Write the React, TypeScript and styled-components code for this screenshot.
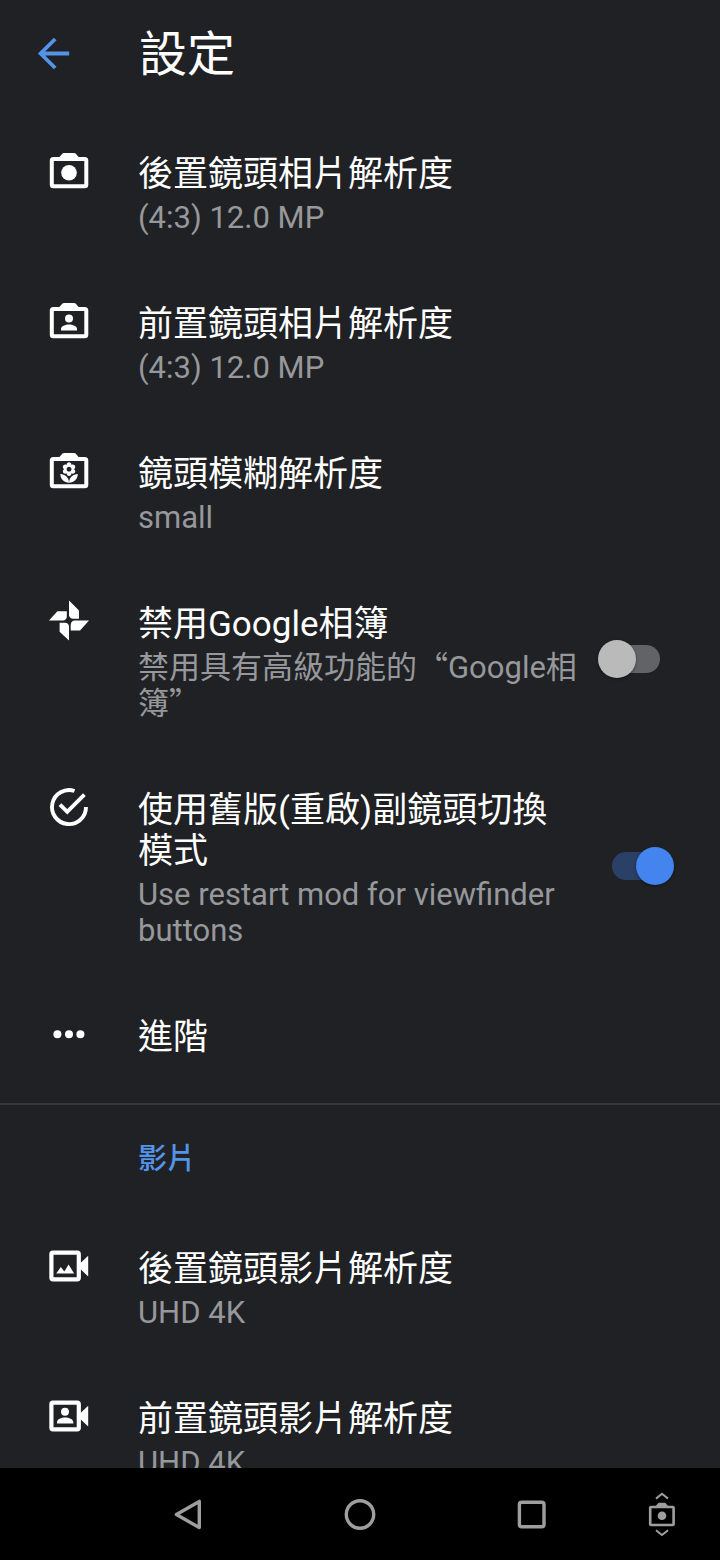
import React, { useId, useState } from "react";
import styled, { createGlobalStyle } from "styled-components";

const GlobalStyle = createGlobalStyle`
  * { box-sizing: border-box; }
  body {
    margin: 0;
    background: #202124;
    font-family: Roboto, "Noto Sans CJK TC", sans-serif;
  }
`;

const Screen = styled.div`
  display: flex;
  flex-direction: column;
  height: 100vh;
  color: #ffffff;
  background: #202124;
`;

const Header = styled.header`
  display: flex;
  align-items: center;
  gap: 61px;
  flex: none;
  height: 106px;
  padding-left: 30px;
  border-bottom: 1px solid #1e1f22;
`;

const BackButton = styled.button`
  display: flex;
  padding: 0;
  border: 0;
  background: none;
  color: #5494e8;
`;

const PageTitle = styled.h1`
  margin: 0;
  padding-top: 4px;
  font-size: 48px;
  line-height: 64px;
  font-weight: 400;
`;

const Content = styled.main`
  flex: 1;
  min-height: 0;
  overflow-y: auto;
  scrollbar-width: none;
`;

const Group = styled.ul`
  margin: 0;
  padding: 0;
  list-style: none;
`;

const FirstGroup = styled(Group)`
  padding: 14px 0 11px;
  border-bottom: 2px solid #37383b;
`;

const Row = styled.div`
  display: flex;
  align-items: flex-start;
  width: 100%;
  padding: 34px 46px 34px 45px;
  border: 0;
  background: none;
  color: inherit;
  font-family: inherit;
  text-align: left;
`;

const IconBox = styled.span`
  display: flex;
  flex: none;
  margin: -7px 45px 0 0;
`;

const TextBlock = styled.span`
  display: flex;
  flex-direction: column;
  flex: 1;
  gap: 5px;
  min-width: 0;
`;

const RowTitle = styled.span`
  font-size: 35px;
  line-height: 41px;
`;

const Summary = styled.span`
  font-size: 31px;
  line-height: 36px;
  color: #96989c;
`;

const WideQuote = styled.span`
  display: inline-block;
  font-family: "Noto Sans CJK TC", sans-serif;
  line-height: 28px;
`;

const SectionTitle = styled.h2`
  margin: 0;
  padding: 34px 46px 36px 138px;
  font-size: 29px;
  line-height: 40px;
  font-weight: 500;
  color: #5494e8;
`;

const Switch = styled.input`
  appearance: none;
  display: grid;
  align-items: center;
  align-self: center;
  flex: none;
  width: 76px;
  height: 38px;
  margin: 0 0 8px 16px;

  &::before,
  &::after {
    content: "";
    grid-area: 1 / 1;
  }
  &::before {
    justify-self: center;
    width: 48px;
    height: 28px;
    border-radius: 14px;
    background: #626366;
  }
  &::after {
    justify-self: start;
    width: 38px;
    height: 38px;
    border-radius: 50%;
    background: #bababa;
    box-shadow: 0 1px 3px rgba(0, 0, 0, 0.4);
  }
  &:checked::before {
    background: #2b4067;
  }
  &:checked::after {
    justify-self: end;
    background: #4384ee;
  }
`;

const NavBar = styled.nav`
  display: grid;
  grid-template-columns: 1fr repeat(3, 172px) 1fr;
  align-items: center;
  flex: none;
  height: 92px;
  background: #000000;
`;

const NavButton = styled.button`
  display: flex;
  justify-content: center;
  padding: 0;
  border: 0;
  background: none;
  color: #9e9e9e;

  &:first-child {
    grid-column: 2;
  }
  &:last-child {
    width: 88px;
  }
`;

function Glyph({ children }: { children: React.ReactNode }) {
  return (
    <svg width="48" height="48" viewBox="0 0 48 48" fill="currentColor" aria-hidden="true">
      {children}
    </svg>
  );
}

function CameraBody() {
  return (
    <>
      <path d="M13.5 11 17.5 6.6Q18 6 19 6H29Q30 6 30.6 6.6L34.5 11Z" />
      <rect x="6.8" y="12" width="34.5" height="27.3" rx="1.6" fill="none" stroke="currentColor" strokeWidth="4" />
    </>
  );
}

function VideoBody() {
  return (
    <>
      <rect x="6.4" y="10.6" width="27.4" height="26.8" rx="1.6" fill="none" stroke="currentColor" strokeWidth="4.2" />
      <path d="M35 21.5 43.2 13.8V34.4L35 26.7Z" />
    </>
  );
}

const RearCamera = () => (
  <Glyph>
    <CameraBody />
    <circle cx="24" cy="25.7" r="7.8" />
  </Glyph>
);

const FrontCamera = () => (
  <Glyph>
    <CameraBody />
    <circle cx="24" cy="21.5" r="4" />
    <path d="M16 33.5V32C16 29 20.5 27.4 24 27.4S32 29 32 32V33.5Z" />
  </Glyph>
);

const FlowerCamera = () => (
  <Glyph>
    <CameraBody />
    <path
      transform="translate(12.4 14.4) scale(0.97)"
      d="M12 22c4.97 0 9-4.03 9-9-4.97 0-9 4.03-9 9zM5.6 10.25c0 1.38 1.12 2.5 2.5 2.5.53 0 1.01-.16 1.42-.44l-.02.19c0 1.38 1.12 2.5 2.5 2.5s2.5-1.12 2.5-2.5l-.02-.19c.4.28.89.44 1.42.44 1.38 0 2.5-1.12 2.5-2.5 0-1-.59-1.85-1.43-2.25.84-.4 1.43-1.25 1.43-2.25 0-1.38-1.12-2.5-2.5-2.5-.53 0-1.01.16-1.42.44l.02-.19C14.5 2.12 13.38 1 12 1S9.5 2.12 9.5 3.5l.02.19c-.4-.28-.89-.44-1.42-.44-1.38 0-2.5 1.12-2.5 2.5 0 1 .59 1.85 1.43 2.25-.84.4-1.43 1.25-1.43 2.25zM12 5.5c1.38 0 2.5 1.12 2.5 2.5s-1.12 2.5-2.5 2.5S9.5 9.38 9.5 8s1.12-2.5 2.5-2.5zM3 13c0 4.97 4.03 9 9 9 0-4.97-4.03-9-9-9z"
    />
  </Glyph>
);

const Pinwheel = () => (
  <Glyph>
    <path d="M24 3.5 34 13.5V21.8H28Q24.6 21.5 24 18.5Z" />
    <path d="M44 23.5 35 33.6H25.7V28Q26 24.3 29 23.5Z" />
    <path d="M24 43.6 14.6 34.8V25.8H20Q23.5 26 24 29Z" />
    <path d="M4 23.5 12.4 14.2H21.8V20Q21.6 22.8 19 23.5Z" />
  </Glyph>
);

const CheckCircle = () => (
  <Glyph>
    <path
      d="M41 24A17 17 0 1 1 29.5 8M15 21.6 22.2 28.8 39.4 11.6"
      fill="none"
      stroke="currentColor"
      strokeWidth="3.9"
    />
  </Glyph>
);

const Dots = () => (
  <Glyph>
    <circle cx="12.4" cy="24.2" r="4" />
    <circle cx="24" cy="24.2" r="4" />
    <circle cx="35.4" cy="24.2" r="4" />
  </Glyph>
);

const RearVideo = () => (
  <Glyph>
    <VideoBody />
    <path d="M11.2 31.6 15.8 25 19.3 29.4 23.6 22.6 29.2 31.6Z" />
  </Glyph>
);

const FrontVideo = () => (
  <Glyph>
    <VideoBody />
    <circle cx="20" cy="19.8" r="4" />
    <path d="M12 31.5V30.2C12 27.3 16.5 25.6 20.1 25.6S28.3 27.3 28.3 30.2V31.5Z" />
  </Glyph>
);

type ItemProps = {
  icon: React.ReactNode;
  title: string;
  summary?: React.ReactNode;
};

function LinkItem({ icon, title, summary }: ItemProps) {
  return (
    <li>
      <Row as="button">
        <IconBox>{icon}</IconBox>
        <TextBlock>
          <RowTitle>{title}</RowTitle>
          {summary && <Summary>{summary}</Summary>}
        </TextBlock>
      </Row>
    </li>
  );
}

function SwitchItem({ icon, title, summary, initial }: ItemProps & { initial: boolean }) {
  const id = useId();
  const [on, setOn] = useState(initial);
  return (
    <li>
      <Row as="label" htmlFor={id}>
        <IconBox>{icon}</IconBox>
        <TextBlock>
          <RowTitle>{title}</RowTitle>
          <Summary>{summary}</Summary>
        </TextBlock>
        <Switch id={id} type="checkbox" checked={on} onChange={(e) => setOn(e.target.checked)} />
      </Row>
    </li>
  );
}

export default function App() {
  return (
    <Screen lang="zh-TW">
      <GlobalStyle />
      <Header>
        <BackButton aria-label="返回">
          <svg width="48" height="48" viewBox="0 0 48 48" fill="none" stroke="currentColor" strokeWidth="3.8" aria-hidden="true">
            <path d="M39.2 24.5H11M25.2 10 10.6 24.5 25.2 39" />
          </svg>
        </BackButton>
        <PageTitle>設定</PageTitle>
      </Header>
      <Content>
        <FirstGroup>
          <LinkItem icon={<RearCamera />} title="後置鏡頭相片解析度" summary="(4:3) 12.0 MP" />
          <LinkItem icon={<FrontCamera />} title="前置鏡頭相片解析度" summary="(4:3) 12.0 MP" />
          <LinkItem icon={<FlowerCamera />} title="鏡頭模糊解析度" summary="small" />
          <SwitchItem
            icon={<Pinwheel />}
            title="禁用Google相簿"
            summary={
              <>
                禁用具有高級功能的<WideQuote>“</WideQuote>Google相簿<WideQuote>”</WideQuote>
              </>
            }
            initial={false}
          />
          <SwitchItem
            icon={<CheckCircle />}
            title="使用舊版(重啟)副鏡頭切換模式"
            summary="Use restart mod for viewfinder buttons"
            initial={true}
          />
          <LinkItem icon={<Dots />} title="進階" />
        </FirstGroup>
        <SectionTitle>影片</SectionTitle>
        <Group>
          <LinkItem icon={<RearVideo />} title="後置鏡頭影片解析度" summary="UHD 4K" />
          <LinkItem icon={<FrontVideo />} title="前置鏡頭影片解析度" summary="UHD 4K" />
        </Group>
      </Content>
      <NavBar>
        <NavButton aria-label="返回上一頁">
          <svg width="48" height="48" viewBox="0 0 48 48" fill="none" stroke="currentColor" strokeWidth="3.4" strokeLinejoin="round" aria-hidden="true">
            <path d="M35.3 11.4V37.6L12.4 24.5Z" />
          </svg>
        </NavButton>
        <NavButton aria-label="主畫面">
          <svg width="48" height="48" viewBox="0 0 48 48" fill="none" stroke="currentColor" strokeWidth="3.4" aria-hidden="true">
            <circle cx="24" cy="24.5" r="13.7" />
          </svg>
        </NavButton>
        <NavButton aria-label="最近使用">
          <svg width="48" height="48" viewBox="0 0 48 48" fill="none" stroke="currentColor" strokeWidth="3.4" aria-hidden="true">
            <rect x="11.4" y="12.2" width="24.6" height="24.6" rx="2.4" />
          </svg>
        </NavButton>
        <NavButton aria-label="切換相機">
          <svg width="48" height="48" viewBox="0 0 48 48" fill="none" stroke="currentColor" aria-hidden="true">
            <path d="M18 8.6 24 3.8 30 8.6M18 40.2 24 45 30 40.2" strokeWidth="2" />
            <rect x="12.2" y="17" width="23.4" height="18" rx="0.8" strokeWidth="2.6" />
            <path d="M17.4 16.5 19.8 13.4Q20.3 12.7 21.2 12.7H26.6Q27.5 12.7 28 13.4L30.4 16.5Z" fill="currentColor" stroke="none" />
            <circle cx="24" cy="25.8" r="4.3" fill="currentColor" stroke="none" />
          </svg>
        </NavButton>
      </NavBar>
    </Screen>
  );
}
